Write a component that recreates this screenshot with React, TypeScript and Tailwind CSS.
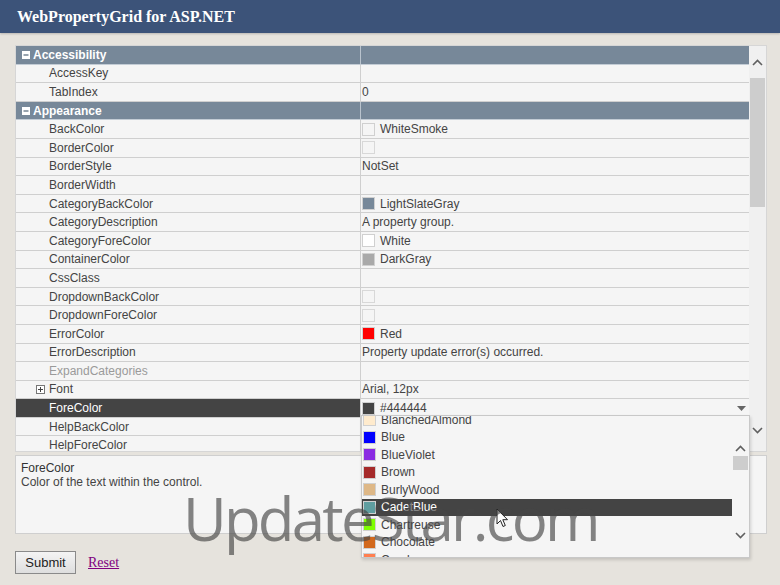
import React from 'react';

type Row =
  | { kind: 'cat'; name: string }
  | {
      kind: 'prop';
      name: string;
      value?: string;
      swatch?: string;
      disabled?: boolean;
      expand?: boolean;
      selected?: boolean;
    };

const rows: Row[] = [
  { kind: 'cat', name: 'Accessibility' },
  { kind: 'prop', name: 'AccessKey' },
  { kind: 'prop', name: 'TabIndex', value: '0' },
  { kind: 'cat', name: 'Appearance' },
  { kind: 'prop', name: 'BackColor', swatch: '#f5f5f5', value: 'WhiteSmoke' },
  { kind: 'prop', name: 'BorderColor', swatch: 'none' },
  { kind: 'prop', name: 'BorderStyle', value: 'NotSet' },
  { kind: 'prop', name: 'BorderWidth' },
  { kind: 'prop', name: 'CategoryBackColor', swatch: '#778899', value: 'LightSlateGray' },
  { kind: 'prop', name: 'CategoryDescription', value: 'A property group.' },
  { kind: 'prop', name: 'CategoryForeColor', swatch: '#ffffff', value: 'White' },
  { kind: 'prop', name: 'ContainerColor', swatch: '#a9a9a9', value: 'DarkGray' },
  { kind: 'prop', name: 'CssClass' },
  { kind: 'prop', name: 'DropdownBackColor', swatch: 'none' },
  { kind: 'prop', name: 'DropdownForeColor', swatch: 'none' },
  { kind: 'prop', name: 'ErrorColor', swatch: '#ff0000', value: 'Red' },
  { kind: 'prop', name: 'ErrorDescription', value: 'Property update error(s) occurred.' },
  { kind: 'prop', name: 'ExpandCategories', disabled: true },
  { kind: 'prop', name: 'Font', value: 'Arial, 12px', expand: true },
  { kind: 'prop', name: 'ForeColor', swatch: '#444444', value: '#444444', selected: true },
  { kind: 'prop', name: 'HelpBackColor' },
  { kind: 'prop', name: 'HelpForeColor' },
];

const colors = [
  { name: 'BlanchedAlmond', c: '#ffebcd' },
  { name: 'Blue', c: '#0000ff' },
  { name: 'BlueViolet', c: '#8a2be2' },
  { name: 'Brown', c: '#a52a2a' },
  { name: 'BurlyWood', c: '#deb887' },
  { name: 'CadetBlue', c: '#5f9ea0', active: true },
  { name: 'Chartreuse', c: '#7fff00' },
  { name: 'Chocolate', c: '#d2691e' },
  { name: 'Coral', c: '#ff7f50' },
];

function Chevron({ up }: { up?: boolean }) {
  return (
    <svg width="11" height="7" viewBox="0 0 11 7" className="block">
      <polyline
        points={up ? '1,6 5.5,1.5 10,6' : '1,1 5.5,5.5 10,1'}
        fill="none"
        stroke="#606060"
        strokeWidth="1.6"
      />
    </svg>
  );
}

function Swatch({ color }: { color: string }) {
  if (color === 'none')
    return <span className="w-[13px] h-[13px] border border-[#d8d8d8] bg-[#f5f5f5] shrink-0" />;
  return (
    <span
      className="w-[13px] h-[13px] border border-[#d0d0d0] shrink-0"
      style={{ backgroundColor: color }}
    />
  );
}

function BoxIcon({ plus }: { plus?: boolean }) {
  if (plus) {
    return (
      <svg width="9" height="9" viewBox="0 0 9 9" className="block shrink-0">
        <rect x="0.5" y="0.5" width="8" height="8" fill="#fff" stroke="#777" />
        <line x1="2" y1="4.5" x2="7" y2="4.5" stroke="#444" strokeWidth="1" />
        <line x1="4.5" y1="2" x2="4.5" y2="7" stroke="#444" strokeWidth="1" />
      </svg>
    );
  }
  return (
    <svg width="8" height="8" viewBox="0 0 8 8" className="block shrink-0">
      <rect x="0" y="0" width="8" height="8" fill="#fff" />
      <line x1="1.5" y1="4" x2="6.5" y2="4" stroke="#6b7b8c" strokeWidth="1.4" />
    </svg>
  );
}

function GridRow({ row }: { row: Row }) {
  if (row.kind === 'cat') {
    return (
      <div className="flex h-[18.6px] bg-[#778899] border-b border-[#c3ccd5] shrink-0">
        <div className="w-[345px] flex items-center gap-[3px] pl-[6px] text-white font-bold text-[12px] border-r border-[#b9c3cd]">
          <BoxIcon />
          <span>{row.name}</span>
        </div>
        <div className="flex-1" />
      </div>
    );
  }
  return (
    <div className="flex h-[18.6px] bg-[#f5f5f5] border-b border-[#cfcfcf] shrink-0 text-[12px]">
      <div
        className={`w-[345px] flex items-center border-r border-[#cfcfcf] ${
          row.selected ? 'bg-[#444444] text-white' : row.disabled ? 'text-[#9a9a9a]' : 'text-[#444]'
        } ${row.expand ? 'pl-[20px] gap-[4px]' : 'pl-[33px]'}`}
      >
        {row.expand && <BoxIcon plus />}
        <span>{row.name}</span>
      </div>
      <div className="flex-1 flex items-center pl-[1px] gap-[5px] text-[#444]">
        {row.swatch && <Swatch color={row.swatch} />}
        {row.value && <span>{row.value}</span>}
        {row.selected && (
          <svg width="9" height="5" viewBox="0 0 9 5" className="ml-auto mr-[3px]">
            <polygon points="0,0 9,0 4.5,5" fill="#666" />
          </svg>
        )}
      </div>
    </div>
  );
}

export default function App() {
  return (
    <div
      className="relative w-[780px] h-[585px] bg-[#e6e3dd] overflow-hidden"
      style={{ fontFamily: '"Liberation Sans", Arial, sans-serif' }}
    >
      {/* Title bar */}
      <div className="h-[33px] bg-[#3c5379] flex items-center pl-[17px] shadow-[0_1px_2px_rgba(0,0,0,0.2)]">
        <span className="text-white font-bold text-[16px] font-['Liberation_Serif',serif]">
          WebPropertyGrid for ASP.NET
        </span>
      </div>

      {/* Property grid */}
      <div className="ml-[15px] mr-[13px] mt-[12px] h-[407px] flex border border-[#d6d6d6] bg-[#f0f0f0] overflow-hidden">
        <div className="flex-1 flex flex-col">
          {rows.map((r, i) => (
            <GridRow key={i} row={r} />
          ))}
        </div>
        <div className="w-[17px] flex flex-col items-center bg-[#f0f0f0]">
          <div className="h-[32px] flex items-center justify-center">
            <Chevron up />
          </div>
          <div className="w-[15px] h-[129px] bg-[#cdcdcd]" />
          <div className="flex-1" />
          <div className="h-[32px] flex items-center justify-center mb-[5px]">
            <Chevron />
          </div>
        </div>
      </div>

      {/* Help pane */}
      <div className="ml-[15px] mr-[13px] mt-[3px] h-[79px] border border-[#cfcfcf] bg-[#f5f5f5] px-[5px] pt-[5px] text-[12px] leading-[14px] text-[#444]">
        <div className="text-[#333]">ForeColor</div>
        <div>Color of the text within the control.</div>
      </div>

      {/* Buttons */}
      <div className="ml-[15px] mt-[17px] flex items-center gap-[12px]">
        <button className="w-[61px] h-[23px] border border-[#8a8a8a] bg-gradient-to-b from-[#f4f4f4] to-[#dedede] text-[13px] text-[#222]">
          Submit
        </button>
        <a className="text-[14px] text-[#800080] underline font-['Liberation_Serif',serif]" href="#">
          Reset
        </a>
      </div>

      {/* Color dropdown */}
      <div className="absolute left-[361px] top-[415px] w-[389px] h-[143px] bg-[#f5f5f5] border border-[#c8c8c8] shadow-[1px_2px_3px_rgba(0,0,0,0.15)] flex overflow-hidden">
        <div className="flex-1 flex flex-col -mt-[5px]">
          {colors.map((c) => (
            <div
              key={c.name}
              className={`h-[17.5px] shrink-0 flex items-center gap-[5px] pl-[1px] text-[12px] ${
                c.active ? 'bg-[#444444] text-white' : 'text-[#444]'
              }`}
            >
              <span
                className="w-[13px] h-[13px] border border-[#d0d0d0] shrink-0"
                style={{ backgroundColor: c.c }}
              />
              <span>{c.name}</span>
            </div>
          ))}
        </div>
        <div className="w-[17px] flex flex-col items-center">
          <div className="h-[38px] flex items-end justify-center pb-[2px]">
            <Chevron up />
          </div>
          <div className="w-[15px] h-[14px] mt-[2px] bg-[#cdcdcd]" />
          <div className="flex-1" />
          <div className="h-[28px] flex items-start justify-center pt-[3px]">
            <Chevron />
          </div>
        </div>
      </div>

      {/* Mouse pointer */}
      <svg className="absolute left-[496px] top-[508px]" width="13" height="20" viewBox="0 0 13 20">
        <path d="M1 1 L1 16 L4.5 12.5 L7 18.5 L9.3 17.5 L6.8 11.7 L11.5 11.7 Z" fill="#fff" stroke="#222" strokeWidth="1" strokeLinejoin="round" />
      </svg>

      {/* Watermark */}
      <div className="absolute left-[183px] top-[488px] text-[60px] leading-none font-normal text-[rgba(70,70,70,0.66)] font-['Open_Sans',sans-serif] tracking-[-2.8px] pointer-events-none">
        UpdateStar.com
      </div>
    </div>
  );
}
